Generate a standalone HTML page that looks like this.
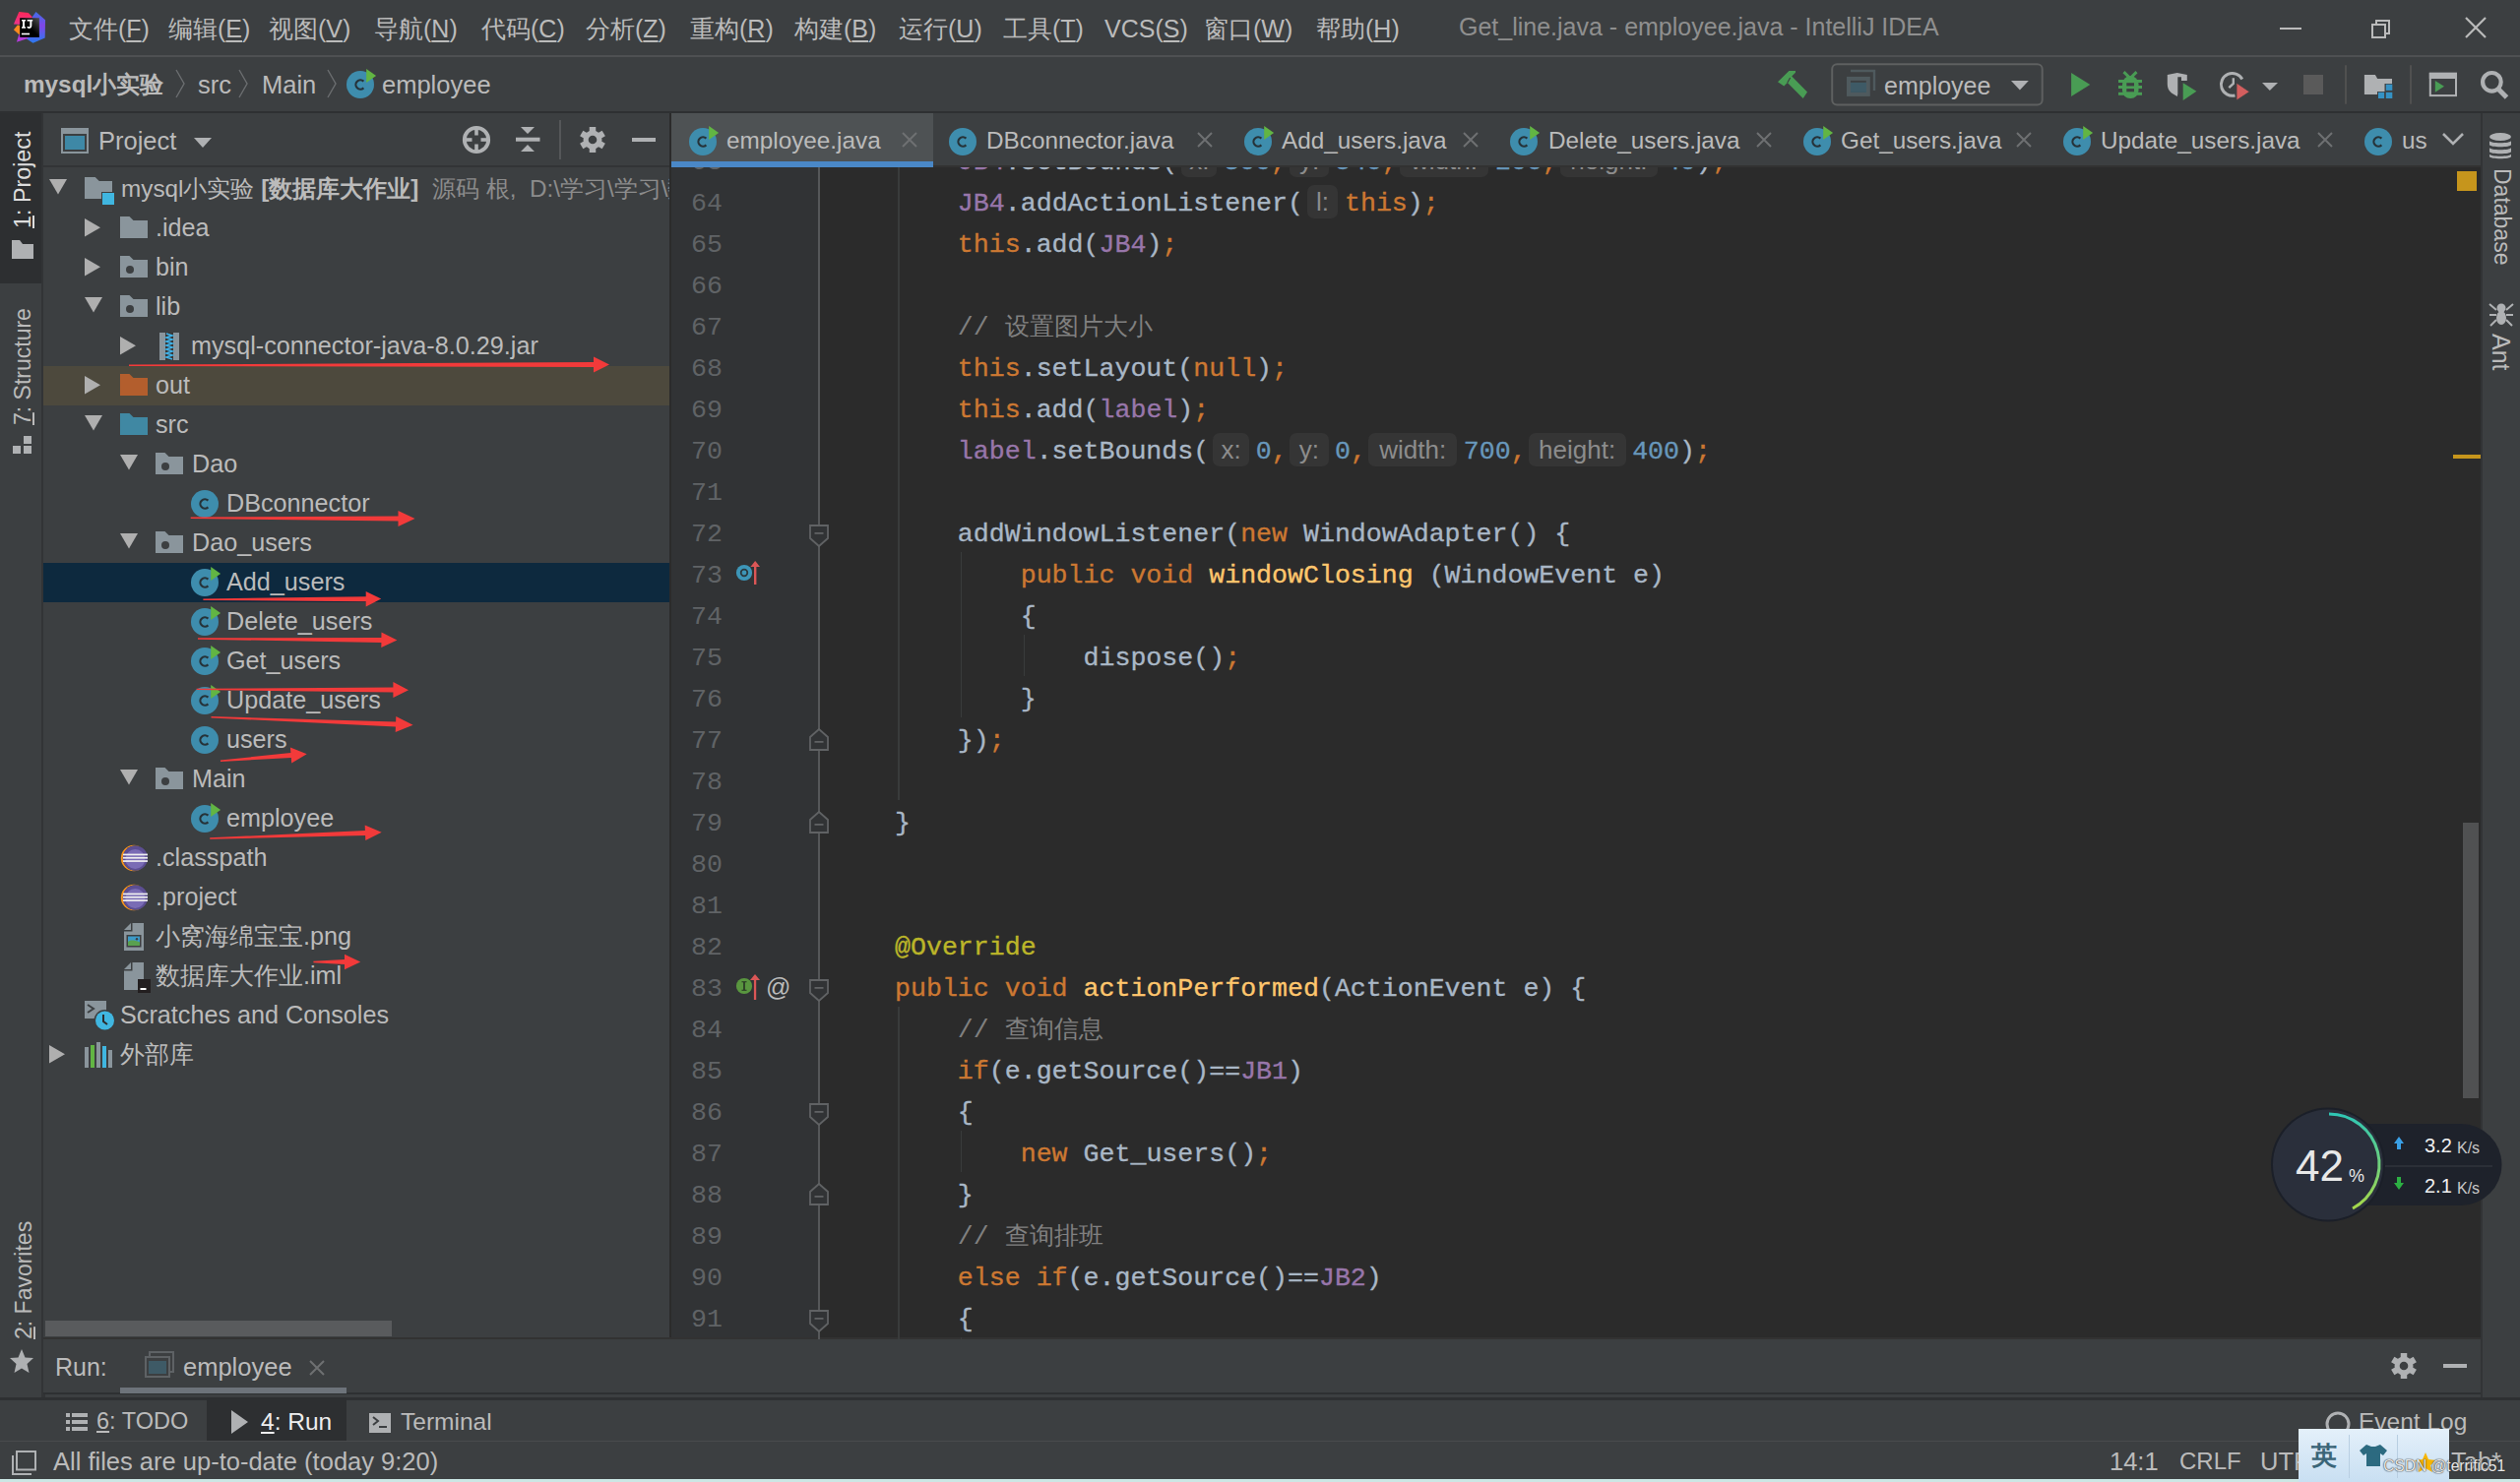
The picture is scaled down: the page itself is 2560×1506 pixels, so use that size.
<!DOCTYPE html><html><head><meta charset="utf-8"><style>
*{margin:0;padding:0;box-sizing:border-box}
html,body{width:2560px;height:1506px;overflow:hidden;background:#3C3F41;font-family:"Liberation Sans", sans-serif;color:#BBBBBB}
.a{position:absolute}
.t{position:absolute;white-space:pre;line-height:1}
.code{position:absolute;white-space:pre;font-family:"Liberation Mono", monospace;font-size:26.6px;line-height:42px;color:#A9B7C6;-webkit-text-stroke:0.35px currentColor}
.k{color:#CC7832} .f{color:#9876AA} .n{color:#6897BB} .c{color:#808080;font-weight:300;-webkit-text-stroke:0} .m{color:#FFC66D} .an{color:#BBB529}
.h{-webkit-text-stroke:0;display:inline-block;position:relative;height:34px;vertical-align:top;margin-top:2px;background:#353535;border-radius:7px;color:#8C8C8C;font-family:"Liberation Sans", sans-serif;font-size:26px;line-height:34px;text-align:center}
.ln{position:absolute;white-space:pre;font-family:"Liberation Mono", monospace;font-size:26.6px;line-height:42px;color:#606366;text-align:right;width:60px}
</style></head><body>
<div class="a" style="left:0;top:0;width:2560px;height:57px;background:#3C3F41"></div>
<div class="a" style="left:0;top:56px;width:2560px;height:2px;background:#4E5052"></div>
<div class="a" style="left:0;top:59px;width:2560px;height:55px;background:#3C3F41"></div>
<div class="a" style="left:0;top:113px;width:2560px;height:2px;background:#2E3032"></div>
<div class="a" style="left:0;top:115px;width:42px;height:1305px;background:#3C3F41"></div>
<div class="a" style="left:0;top:115px;width:42px;height:173px;background:#2D2F31"></div>
<div class="a" style="left:42px;top:115px;width:2px;height:1305px;background:#323436"></div>
<div class="a" style="left:2520px;top:115px;width:2px;height:1305px;background:#323436"></div>
<div class="a" style="left:2522px;top:115px;width:38px;height:1305px;background:#3C3F41"></div>
<div class="a" style="left:44px;top:115px;width:636px;height:1246px;background:#3C3F41"></div>
<div class="a" style="left:44px;top:168px;width:636px;height:2px;background:#323436"></div>
<div class="a" style="left:680px;top:115px;width:2px;height:1246px;background:#2B2B2B"></div>
<div class="a" style="left:682px;top:115px;width:1838px;height:55px;background:#3C3F41"></div>
<div class="a" style="left:682px;top:115px;width:266px;height:50px;background:#4E5254"></div>
<div class="a" style="left:682px;top:164px;width:266px;height:6px;background:#4A88C7"></div>
<div class="a" style="left:948px;top:168px;width:1572px;height:2px;background:#323232"></div>
<div class="a" style="left:682px;top:170px;width:150px;height:1191px;background:#313335"></div>
<div class="a" style="left:832px;top:170px;width:1688px;height:1191px;background:#2B2B2B"></div>
<div class="a" style="left:44px;top:1361px;width:2476px;height:55px;background:#3C3F41"></div>
<div class="a" style="left:44px;top:1359px;width:2476px;height:2px;background:#323232"></div>
<div class="a" style="left:44px;top:1414.5px;width:2476px;height:2px;background:#2E3032"></div>
<div class="a" style="left:0;top:1420px;width:2560px;height:2.5px;background:#2E3032"></div>
<div class="a" style="left:44px;top:1416.5px;width:2px;height:3.5px;background:#323436"></div>
<div class="a" style="left:0;top:1422.5px;width:2560px;height:41.5px;background:#3C3F41"></div>
<div class="a" style="left:210px;top:1420px;width:142px;height:44px;background:#2D2F31"></div>
<div class="a" style="left:0;top:1464px;width:2560px;height:2px;background:#494B4D"></div>
<div class="a" style="left:0;top:1465px;width:2560px;height:41px;background:#3C3F41"></div>
<div class="t" style="left:70px;top:17px;font-size:25px;color:#BBBBBB">文件(<u style="text-underline-offset:3px">F</u>)</div>
<div class="t" style="left:171px;top:17px;font-size:25px;color:#BBBBBB">编辑(<u style="text-underline-offset:3px">E</u>)</div>
<div class="t" style="left:273px;top:17px;font-size:25px;color:#BBBBBB">视图(<u style="text-underline-offset:3px">V</u>)</div>
<div class="t" style="left:380px;top:17px;font-size:25px;color:#BBBBBB">导航(<u style="text-underline-offset:3px">N</u>)</div>
<div class="t" style="left:489px;top:17px;font-size:25px;color:#BBBBBB">代码(<u style="text-underline-offset:3px">C</u>)</div>
<div class="t" style="left:595px;top:17px;font-size:25px;color:#BBBBBB">分析(<u style="text-underline-offset:3px">Z</u>)</div>
<div class="t" style="left:701px;top:17px;font-size:25px;color:#BBBBBB">重构(<u style="text-underline-offset:3px">R</u>)</div>
<div class="t" style="left:807px;top:17px;font-size:25px;color:#BBBBBB">构建(<u style="text-underline-offset:3px">B</u>)</div>
<div class="t" style="left:913px;top:17px;font-size:25px;color:#BBBBBB">运行(<u style="text-underline-offset:3px">U</u>)</div>
<div class="t" style="left:1019px;top:17px;font-size:25px;color:#BBBBBB">工具(<u style="text-underline-offset:3px">T</u>)</div>
<div class="t" style="left:1122px;top:17px;font-size:25px;color:#BBBBBB">VCS(<u style="text-underline-offset:3px">S</u>)</div>
<div class="t" style="left:1223px;top:17px;font-size:25px;color:#BBBBBB">窗口(<u style="text-underline-offset:3px">W</u>)</div>
<div class="t" style="left:1337px;top:17px;font-size:25px;color:#BBBBBB">帮助(<u style="text-underline-offset:3px">H</u>)</div>
<div class="t" style="left:1482px;top:15px;font-size:25px;color:#8F8F8F">Get_line.java - employee.java - IntelliJ IDEA</div>
<svg class="a" style="left:8px;top:6px" width="44" height="44" viewBox="0 0 44 44">
<defs><linearGradient id="lgb" x1="0" y1="0" x2="0" y2="1"><stop offset="0" stop-color="#3E6FE6"/><stop offset="0.45" stop-color="#8146E8"/><stop offset="1" stop-color="#2A7BEF"/></linearGradient>
<linearGradient id="lgp" x1="0" y1="0" x2="0" y2="1"><stop offset="0" stop-color="#FE2857"/><stop offset="1" stop-color="#E8358C"/></linearGradient>
<linearGradient id="lgk" x1="1" y1="0" x2="0" y2="1"><stop offset="0" stop-color="#505050"/><stop offset="0.5" stop-color="#000"/></linearGradient></defs>
<polygon points="28.5,5.9 38,14.2 37.7,32.6 25.5,37.7 19,33.5 24.9,11" fill="url(#lgb)"/>
<polygon points="11.3,5.9 20.8,7.1 25,11.5 14,19 5.9,18.4" fill="url(#lgp)"/>
<polygon points="5.9,24.3 9.8,19.6 12.5,20 12.5,29.5 11.3,29.1" fill="#FB8A1E"/>
<polygon points="8.9,36.8 11.3,29 21.4,32 19,33.5" fill="#B23CD8"/>
<rect x="12.2" y="12.2" width="19.7" height="19.7" fill="url(#lgk)"/>
<path d="M14 14H18V15.6H17V21.3H18V22.8H14V21.3H15V15.6H14Z" fill="#fff"/>
<path d="M19.6 14H25.2V15.6H24.3V20C24.3 22 23.2 22.9 21.5 22.9C20.3 22.9 19.5 22.4 19.2 21.5L20.6 20.8C20.8 21.2 21.1 21.3 21.5 21.3C22.1 21.3 22.4 21 22.4 20.2V15.6H19.6Z" fill="#fff"/>
<rect x="13.9" y="27.7" width="8.2" height="1.6" fill="#fff"/>
</svg>
<div class="a" style="left:2316px;top:28px;width:22px;height:2px;background:#BBBBBB"></div>
<div class="a" style="left:2413px;top:20px;width:15px;height:15px;border:2px solid #BBBBBB"></div>
<div class="a" style="left:2409px;top:24px;width:15px;height:15px;border:2px solid #BBBBBB;background:#3C3F41"></div>
<svg class="a" style="left:2503px;top:16px" width="24" height="24" viewBox="0 0 24 24"><path d="M2 2L22 22M22 2L2 22" stroke="#BBBBBB" stroke-width="2.2"/></svg>
<div class="t" style="left:24px;top:74px;font-size:24.3px;font-weight:bold;color:#BBBBBB">mysql小实验</div>
<svg class="a" style="left:178px;top:70px" width="10" height="30" viewBox="0 0 10 30"><path d="M1 1L9 15L1 29" stroke="#6B6E70" stroke-width="1.4" fill="none"/></svg>
<svg class="a" style="left:242px;top:70px" width="10" height="30" viewBox="0 0 10 30"><path d="M1 1L9 15L1 29" stroke="#6B6E70" stroke-width="1.4" fill="none"/></svg>
<svg class="a" style="left:332px;top:70px" width="10" height="30" viewBox="0 0 10 30"><path d="M1 1L9 15L1 29" stroke="#6B6E70" stroke-width="1.4" fill="none"/></svg>
<div class="t" style="left:201px;top:74px;font-size:25.5px;color:#BBBBBB">src</div>
<div class="t" style="left:266px;top:74px;font-size:25.5px;color:#BBBBBB">Main</div>
<div class="t" style="left:388px;top:74px;font-size:25.5px;color:#BBBBBB">employee</div>
<div class="a" style="left:62px;top:130px;width:28px;height:26px;background:#8A959C"></div>
<div class="a" style="left:64px;top:136px;width:24px;height:18px;background:#3C3F41"></div>
<div class="a" style="left:66px;top:138px;width:20px;height:14px;background:#3E88A6"></div>
<div class="t" style="left:100px;top:131px;font-size:25.5px;color:#BBBBBB">Project</div>
<svg class="a" style="left:197px;top:140px" width="18" height="11" viewBox="0 0 18 11"><path d="M0 0H18L9 10Z" fill="#AFB1B3"/></svg>
<svg class="a" style="left:468px;top:126px" width="32" height="32" viewBox="0 0 32 32"><circle cx="16" cy="16" r="12.2" stroke="#AFB1B3" stroke-width="3.8" fill="none"/><rect x="14.2" y="3" width="3.6" height="8.5" fill="#AFB1B3"/><rect x="14.2" y="20.5" width="3.6" height="8.5" fill="#AFB1B3"/><rect x="3" y="14.2" width="8.5" height="3.6" fill="#AFB1B3"/><rect x="20.5" y="14.2" width="8.5" height="3.6" fill="#AFB1B3"/></svg>
<svg class="a" style="left:524px;top:129px" width="26" height="26" viewBox="0 0 26 26"><path d="M5 0H19L12 7Z M5 25H19L12 18Z" fill="#AFB1B3"/><rect x="0" y="10.7" width="24.5" height="4" fill="#AFB1B3"/></svg>
<div class="a" style="left:568px;top:122px;width:2px;height:40px;background:#555759"></div>
<svg class="a" style="left:588px;top:128px" width="28" height="28" viewBox="0 0 28 28"><g fill="#AFB1B3"><circle cx="14" cy="14" r="9.5"/><rect x="-3.25" y="-13" width="6.5" height="26" transform="translate(14 14) rotate(0)"/><rect x="-3.25" y="-13" width="6.5" height="26" transform="translate(14 14) rotate(60)"/><rect x="-3.25" y="-13" width="6.5" height="26" transform="translate(14 14) rotate(120)"/></g><circle cx="14" cy="14" r="4.3" fill="#3C3F41"/></svg>
<div class="a" style="left:642px;top:140px;width:24px;height:4px;background:#AFB1B3"></div>
<div class="a" style="left:0;top:170px;width:680px;height:1191px;overflow:hidden"><div class="a" style="left:0;top:-170px;width:680px;height:1506px">
<div class="a" style="left:44px;top:372px;width:636px;height:40px;background:#4D493D"></div>
<div class="a" style="left:44px;top:572px;width:636px;height:40px;background:#0D293E"></div>
<svg class="a" style="left:50px;top:182px" width="18" height="16" viewBox="0 0 18 16"><path d="M0 0H18L9 15.5Z" fill="#AFAFAF"/></svg>
<svg class="a" style="left:86px;top:180px" width="31" height="37" viewBox="0 0 31 37"><path d="M0 0H10.7L14.8 4H28V22H0Z" fill="#8A959C"/><rect x="17" y="15" width="14" height="14" fill="#3C3F41"/><rect x="18" y="16" width="12" height="12" fill="#40B6E0"/></svg>
<div class="t" style="left:123px;top:179px;font-size:25.2px;color:#BBBBBB"><span style="font-size:24.3px">mysql小实验 <b>[数据库大作业]</b>  <span style="color:#8C8C8C">源码 根,  D:\学习\学习\数据库</span></span></div>
<svg class="a" style="left:86px;top:222px" width="17" height="19" viewBox="0 0 17 19"><path d="M0 0L16 9.2L0 18.4Z" fill="#AFAFAF"/></svg>
<svg class="a" style="left:122px;top:220px" width="28" height="22" viewBox="0 0 28 22"><path d="M0 0H9.5L13.5 4H28V22H0Z" fill="#8A959C"/></svg>
<div class="t" style="left:158px;top:219px;font-size:25.2px;color:#BBBBBB">.idea</div>
<svg class="a" style="left:86px;top:262px" width="17" height="19" viewBox="0 0 17 19"><path d="M0 0L16 9.2L0 18.4Z" fill="#AFAFAF"/></svg>
<svg class="a" style="left:122px;top:260px" width="28" height="22" viewBox="0 0 28 22"><path d="M0 0H9.5L13.5 4H28V22H0Z" fill="#8A959C"/><circle cx="10" cy="14" r="4" fill="#3C3F41"/></svg>
<div class="t" style="left:158px;top:259px;font-size:25.2px;color:#BBBBBB">bin</div>
<svg class="a" style="left:86px;top:302px" width="18" height="16" viewBox="0 0 18 16"><path d="M0 0H18L9 15.5Z" fill="#AFAFAF"/></svg>
<svg class="a" style="left:122px;top:300px" width="28" height="22" viewBox="0 0 28 22"><path d="M0 0H9.5L13.5 4H28V22H0Z" fill="#8A959C"/><circle cx="10" cy="14" r="4" fill="#3C3F41"/></svg>
<div class="t" style="left:158px;top:299px;font-size:25.2px;color:#BBBBBB">lib</div>
<svg class="a" style="left:86px;top:382px" width="17" height="19" viewBox="0 0 17 19"><path d="M0 0L16 9.2L0 18.4Z" fill="#AFAFAF"/></svg>
<svg class="a" style="left:122px;top:380px" width="28" height="22" viewBox="0 0 28 22"><path d="M0 0H9.5L13.5 4H28V22H0Z" fill="#B35E2D"/></svg>
<div class="t" style="left:158px;top:379px;font-size:25.2px;color:#BBBBBB">out</div>
<svg class="a" style="left:86px;top:422px" width="18" height="16" viewBox="0 0 18 16"><path d="M0 0H18L9 15.5Z" fill="#AFAFAF"/></svg>
<svg class="a" style="left:122px;top:420px" width="28" height="22" viewBox="0 0 28 22"><path d="M0 0H9.5L13.5 4H28V22H0Z" fill="#4088A3"/></svg>
<div class="t" style="left:158px;top:419px;font-size:25.2px;color:#BBBBBB">src</div>
<svg class="a" style="left:122px;top:342px" width="17" height="19" viewBox="0 0 17 19"><path d="M0 0L16 9.2L0 18.4Z" fill="#AFAFAF"/></svg>
<svg class="a" style="left:162px;top:338px" width="20" height="28" viewBox="0 0 20 28"><rect x="0" y="0" width="6" height="28" fill="#8A959C"/><rect x="14" y="0" width="6" height="28" fill="#8A959C"/><rect x="6" y="0" width="8" height="28" fill="#3A3634"/><path d="M7 1L13 3L7 5L13 7L7 9L13 11L7 13L13 15L7 17L13 19L7 21L13 23L7 25L13 27" stroke="#3FB3EA" stroke-width="1.6" fill="none"/></svg>
<div class="t" style="left:194px;top:339px;font-size:25.2px;color:#BBBBBB">mysql-connector-java-8.0.29.jar</div>
<svg class="a" style="left:122px;top:462px" width="18" height="16" viewBox="0 0 18 16"><path d="M0 0H18L9 15.5Z" fill="#AFAFAF"/></svg>
<svg class="a" style="left:158px;top:460px" width="28" height="22" viewBox="0 0 28 22"><path d="M0 0H9.5L13.5 4H28V22H0Z" fill="#8A959C"/><circle cx="10" cy="14" r="4" fill="#3C3F41"/></svg>
<div class="t" style="left:195px;top:459px;font-size:25.2px;color:#BBBBBB">Dao</div>
<svg class="a" style="left:122px;top:542px" width="18" height="16" viewBox="0 0 18 16"><path d="M0 0H18L9 15.5Z" fill="#AFAFAF"/></svg>
<svg class="a" style="left:158px;top:540px" width="28" height="22" viewBox="0 0 28 22"><path d="M0 0H9.5L13.5 4H28V22H0Z" fill="#8A959C"/><circle cx="10" cy="14" r="4" fill="#3C3F41"/></svg>
<div class="t" style="left:195px;top:539px;font-size:25.2px;color:#BBBBBB">Dao_users</div>
<svg class="a" style="left:122px;top:782px" width="18" height="16" viewBox="0 0 18 16"><path d="M0 0H18L9 15.5Z" fill="#AFAFAF"/></svg>
<svg class="a" style="left:158px;top:780px" width="28" height="22" viewBox="0 0 28 22"><path d="M0 0H9.5L13.5 4H28V22H0Z" fill="#8A959C"/><circle cx="10" cy="14" r="4" fill="#3C3F41"/></svg>
<div class="t" style="left:195px;top:779px;font-size:25.2px;color:#BBBBBB">Main</div>
<svg class="a" style="left:194px;top:494px" width="32" height="34" viewBox="0 0 32 34"><circle cx="14" cy="18" r="14" fill="#3E8DAD"/><path d="M17.4 14.6A4.7 4.7 0 1 0 17.4 21.4" stroke="#263238" stroke-width="2.2" fill="none"/></svg>
<div class="t" style="left:230px;top:499px;font-size:25.2px;color:#BBBBBB">DBconnector</div>
<svg class="a" style="left:194px;top:574px" width="32" height="34" viewBox="0 0 32 34"><circle cx="14" cy="18" r="14" fill="#3E8DAD"/><path d="M17.4 14.6A4.7 4.7 0 1 0 17.4 21.4" stroke="#263238" stroke-width="2.2" fill="none"/><path d="M20.2 2L20.2 15.9L30.1 9.1Z" fill="#62B543"/></svg>
<div class="t" style="left:230px;top:579px;font-size:25.2px;color:#BBBBBB">Add_users</div>
<svg class="a" style="left:194px;top:614px" width="32" height="34" viewBox="0 0 32 34"><circle cx="14" cy="18" r="14" fill="#3E8DAD"/><path d="M17.4 14.6A4.7 4.7 0 1 0 17.4 21.4" stroke="#263238" stroke-width="2.2" fill="none"/><path d="M20.2 2L20.2 15.9L30.1 9.1Z" fill="#62B543"/></svg>
<div class="t" style="left:230px;top:619px;font-size:25.2px;color:#BBBBBB">Delete_users</div>
<svg class="a" style="left:194px;top:654px" width="32" height="34" viewBox="0 0 32 34"><circle cx="14" cy="18" r="14" fill="#3E8DAD"/><path d="M17.4 14.6A4.7 4.7 0 1 0 17.4 21.4" stroke="#263238" stroke-width="2.2" fill="none"/><path d="M20.2 2L20.2 15.9L30.1 9.1Z" fill="#62B543"/></svg>
<div class="t" style="left:230px;top:659px;font-size:25.2px;color:#BBBBBB">Get_users</div>
<svg class="a" style="left:194px;top:694px" width="32" height="34" viewBox="0 0 32 34"><circle cx="14" cy="18" r="14" fill="#3E8DAD"/><path d="M17.4 14.6A4.7 4.7 0 1 0 17.4 21.4" stroke="#263238" stroke-width="2.2" fill="none"/><path d="M20.2 2L20.2 15.9L30.1 9.1Z" fill="#62B543"/></svg>
<div class="t" style="left:230px;top:699px;font-size:25.2px;color:#BBBBBB">Update_users</div>
<svg class="a" style="left:194px;top:734px" width="32" height="34" viewBox="0 0 32 34"><circle cx="14" cy="18" r="14" fill="#3E8DAD"/><path d="M17.4 14.6A4.7 4.7 0 1 0 17.4 21.4" stroke="#263238" stroke-width="2.2" fill="none"/></svg>
<div class="t" style="left:230px;top:739px;font-size:25.2px;color:#BBBBBB">users</div>
<svg class="a" style="left:194px;top:814px" width="32" height="34" viewBox="0 0 32 34"><circle cx="14" cy="18" r="14" fill="#3E8DAD"/><path d="M17.4 14.6A4.7 4.7 0 1 0 17.4 21.4" stroke="#263238" stroke-width="2.2" fill="none"/><path d="M20.2 2L20.2 15.9L30.1 9.1Z" fill="#62B543"/></svg>
<div class="t" style="left:230px;top:819px;font-size:25.2px;color:#BBBBBB">employee</div>
<svg class="a" style="left:121px;top:857px" width="30" height="30" viewBox="0 0 30 30"><circle cx="15" cy="15" r="13.2" fill="#F7941E"/><circle cx="16.6" cy="15" r="12.8" fill="#3C3F41"/><circle cx="16.4" cy="15" r="12.6" fill="#5C4E93"/><circle cx="16.4" cy="16" r="10" fill="#7A6CB5"/><rect x="4" y="10.6" width="25" height="1.7" fill="#F0F0F0"/><rect x="4" y="13.9" width="25" height="1.7" fill="#F0F0F0"/><rect x="4" y="17.2" width="25" height="1.7" fill="#F0F0F0"/></svg>
<div class="t" style="left:158px;top:859px;font-size:25.2px;color:#BBBBBB">.classpath</div>
<svg class="a" style="left:121px;top:897px" width="30" height="30" viewBox="0 0 30 30"><circle cx="15" cy="15" r="13.2" fill="#F7941E"/><circle cx="16.6" cy="15" r="12.8" fill="#3C3F41"/><circle cx="16.4" cy="15" r="12.6" fill="#5C4E93"/><circle cx="16.4" cy="16" r="10" fill="#7A6CB5"/><rect x="4" y="10.6" width="25" height="1.7" fill="#F0F0F0"/><rect x="4" y="13.9" width="25" height="1.7" fill="#F0F0F0"/><rect x="4" y="17.2" width="25" height="1.7" fill="#F0F0F0"/></svg>
<div class="t" style="left:158px;top:899px;font-size:25.2px;color:#BBBBBB">.project</div>
<svg class="a" style="left:126px;top:938px" width="22" height="28" viewBox="0 0 22 28"><path d="M8.5 0H20V28H0V8.5H8.5Z" fill="#8A959C"/><path d="M0 7L7 0V7Z" fill="#8A959C"/><rect x="2.5" y="12" width="15" height="12.5" fill="#3C3F41"/><rect x="4" y="13.5" width="12" height="9.5" fill="#3D9AC8"/><path d="M4 23V19C7 17 10 17 16 19.5V23Z" fill="#59A14F"/><circle cx="13" cy="16.2" r="1.2" fill="#3C3F41"/></svg>
<div class="t" style="left:158px;top:939px;font-size:25.2px;color:#BBBBBB">小窝海绵宝宝.png</div>
<svg class="a" style="left:126px;top:978px" width="28" height="32" viewBox="0 0 28 32"><path d="M8.5 0H20V28H0V8.5H8.5Z" fill="#8A959C"/><path d="M0 7L7 0V7Z" fill="#8A959C"/><rect x="14" y="17" width="13" height="14" fill="#231F20"/><rect x="16.5" y="26" width="6" height="2" fill="#fff"/></svg>
<div class="t" style="left:158px;top:979px;font-size:25.2px;color:#BBBBBB">数据库大作业.iml</div>
<svg class="a" style="left:86px;top:1017px" width="32" height="32" viewBox="0 0 32 32"><rect x="0" y="0" width="22" height="18" fill="#8A959C"/><path d="M3 4L9 8L3 12" stroke="#3C3F41" stroke-width="2" fill="none"/><circle cx="20.5" cy="20" r="11" fill="#3C3F41"/><circle cx="20.5" cy="20" r="9.5" fill="#40B6E0"/><path d="M19 14V21L23 24" stroke="#2B2B2B" stroke-width="2" fill="none"/></svg>
<div class="t" style="left:122px;top:1019px;font-size:25.2px;color:#BBBBBB">Scratches and Consoles</div>
<svg class="a" style="left:50px;top:1062px" width="17" height="19" viewBox="0 0 17 19"><path d="M0 0L16 9.2L0 18.4Z" fill="#AFAFAF"/></svg>
<svg class="a" style="left:86px;top:1059px" width="30" height="26" viewBox="0 0 30 26"><rect x="0" y="5" width="4" height="21" fill="#8A959C"/><rect x="6" y="3" width="4" height="23" fill="#62B543"/><rect x="12" y="0" width="4" height="26" fill="#8A959C"/><rect x="18" y="4" width="4" height="22" fill="#40B6E0"/><rect x="24" y="8" width="4" height="18" fill="#8A959C"/></svg>
<div class="t" style="left:122px;top:1059px;font-size:25.2px;color:#BBBBBB">外部库</div>
</div></div>
<div class="a" style="left:46px;top:1342px;width:352px;height:16px;background:#595B5D"></div>
<div class="a" style="left:832px;top:170px;width:1688px;height:1191px;overflow:hidden">
<div class="code" style="left:13.200000000000045px;top:-26px">        <span class="f">JB4</span>.setBounds(<span class="h" style="width:36px;margin-left:4px;margin-right:7px">x:</span><span class="n">300</span><span class="k">,</span><span class="h" style="width:40px;margin-left:3px;margin-right:6px">y:</span><span class="n">540</span><span class="k">,</span><span class="h" style="width:90px;margin-left:2px;margin-right:7px">width:</span><span class="n">200</span><span class="k">,</span><span class="h" style="width:99px;margin-left:2px;margin-right:7px">height:</span><span class="n">40</span>)<span class="k">;</span></div>
<div class="code" style="left:13.200000000000045px;top:16px">        <span class="f">JB4</span>.addActionListener(<span class="h" style="width:31px;margin-left:4px;margin-right:7px">l:</span><span class="k">this</span>)<span class="k">;</span></div>
<div class="code" style="left:13.200000000000045px;top:58px">        <span class="k">this</span>.add(<span class="f">JB4</span>)<span class="k">;</span></div>
<div class="code" style="left:13.200000000000045px;top:100px"></div>
<div class="code" style="left:13.200000000000045px;top:142px">        <span class="c">// <span style="font-size:25px">设置图片大小</span></span></div>
<div class="code" style="left:13.200000000000045px;top:184px">        <span class="k">this</span>.setLayout(<span class="k">null</span>)<span class="k">;</span></div>
<div class="code" style="left:13.200000000000045px;top:226px">        <span class="k">this</span>.add(<span class="f">label</span>)<span class="k">;</span></div>
<div class="code" style="left:13.200000000000045px;top:268px">        <span class="f">label</span>.setBounds(<span class="h" style="width:37px;margin-left:4px;margin-right:6.5px">x:</span><span class="n">0</span><span class="k">,</span><span class="h" style="width:40px;margin-left:2.3px;margin-right:6px">y:</span><span class="n">0</span><span class="k">,</span><span class="h" style="width:90px;margin-left:2.4px;margin-right:6.5px">width:</span><span class="n">700</span><span class="k">,</span><span class="h" style="width:99px;margin-left:2px;margin-right:6.5px">height:</span><span class="n">400</span>)<span class="k">;</span></div>
<div class="code" style="left:13.200000000000045px;top:310px"></div>
<div class="code" style="left:13.200000000000045px;top:352px">        addWindowListener(<span class="k">new</span> WindowAdapter() {</div>
<div class="code" style="left:13.200000000000045px;top:394px">            <span class="k">public void </span><span class="m">windowClosing</span> (WindowEvent e)</div>
<div class="code" style="left:13.200000000000045px;top:436px">            {</div>
<div class="code" style="left:13.200000000000045px;top:478px">                dispose()<span class="k">;</span></div>
<div class="code" style="left:13.200000000000045px;top:520px">            }</div>
<div class="code" style="left:13.200000000000045px;top:562px">        })<span class="k">;</span></div>
<div class="code" style="left:13.200000000000045px;top:604px"></div>
<div class="code" style="left:13.200000000000045px;top:646px">    }</div>
<div class="code" style="left:13.200000000000045px;top:688px"></div>
<div class="code" style="left:13.200000000000045px;top:730px"></div>
<div class="code" style="left:13.200000000000045px;top:772px">    <span class="an">@Override</span></div>
<div class="code" style="left:13.200000000000045px;top:814px">    <span class="k">public void </span><span class="m">actionPerformed</span>(ActionEvent e) {</div>
<div class="code" style="left:13.200000000000045px;top:856px">        <span class="c">// <span style="font-size:25px">查询信息</span></span></div>
<div class="code" style="left:13.200000000000045px;top:898px">        <span class="k">if</span>(e.getSource()==<span class="f">JB1</span>)</div>
<div class="code" style="left:13.200000000000045px;top:940px">        {</div>
<div class="code" style="left:13.200000000000045px;top:982px">            <span class="k">new</span> Get_users()<span class="k">;</span></div>
<div class="code" style="left:13.200000000000045px;top:1024px">        }</div>
<div class="code" style="left:13.200000000000045px;top:1066px">        <span class="c">// <span style="font-size:25px">查询排班</span></span></div>
<div class="code" style="left:13.200000000000045px;top:1108px">        <span class="k">else if</span>(e.getSource()==<span class="f">JB2</span>)</div>
<div class="code" style="left:13.200000000000045px;top:1150px">        {</div>
</div>
<div class="a" style="left:682px;top:170px;width:150px;height:1191px;overflow:hidden">
<div class="ln" style="left:-8px;top:-26px">63</div>
<div class="ln" style="left:-8px;top:16px">64</div>
<div class="ln" style="left:-8px;top:58px">65</div>
<div class="ln" style="left:-8px;top:100px">66</div>
<div class="ln" style="left:-8px;top:142px">67</div>
<div class="ln" style="left:-8px;top:184px">68</div>
<div class="ln" style="left:-8px;top:226px">69</div>
<div class="ln" style="left:-8px;top:268px">70</div>
<div class="ln" style="left:-8px;top:310px">71</div>
<div class="ln" style="left:-8px;top:352px">72</div>
<div class="ln" style="left:-8px;top:394px">73</div>
<div class="ln" style="left:-8px;top:436px">74</div>
<div class="ln" style="left:-8px;top:478px">75</div>
<div class="ln" style="left:-8px;top:520px">76</div>
<div class="ln" style="left:-8px;top:562px">77</div>
<div class="ln" style="left:-8px;top:604px">78</div>
<div class="ln" style="left:-8px;top:646px">79</div>
<div class="ln" style="left:-8px;top:688px">80</div>
<div class="ln" style="left:-8px;top:730px">81</div>
<div class="ln" style="left:-8px;top:772px">82</div>
<div class="ln" style="left:-8px;top:814px">83</div>
<div class="ln" style="left:-8px;top:856px">84</div>
<div class="ln" style="left:-8px;top:898px">85</div>
<div class="ln" style="left:-8px;top:940px">86</div>
<div class="ln" style="left:-8px;top:982px">87</div>
<div class="ln" style="left:-8px;top:1024px">88</div>
<div class="ln" style="left:-8px;top:1066px">89</div>
<div class="ln" style="left:-8px;top:1108px">90</div>
<div class="ln" style="left:-8px;top:1150px">91</div>
</div>
<div class="a" style="left:831px;top:170px;width:2px;height:1191px;background:#555759"></div>
<svg class="a" style="left:821px;top:532px" width="22" height="26" viewBox="0 0 22 26"><path d="M2 2H20V15L11 23L2 15Z" fill="#313335" stroke="#606264" stroke-width="1.8"/><rect x="6.5" y="9" width="9" height="1.8" fill="#606264"/></svg>
<svg class="a" style="left:821px;top:994px" width="22" height="26" viewBox="0 0 22 26"><path d="M2 2H20V15L11 23L2 15Z" fill="#313335" stroke="#606264" stroke-width="1.8"/><rect x="6.5" y="9" width="9" height="1.8" fill="#606264"/></svg>
<svg class="a" style="left:821px;top:1120px" width="22" height="26" viewBox="0 0 22 26"><path d="M2 2H20V15L11 23L2 15Z" fill="#313335" stroke="#606264" stroke-width="1.8"/><rect x="6.5" y="9" width="9" height="1.8" fill="#606264"/></svg>
<svg class="a" style="left:821px;top:1330px" width="22" height="26" viewBox="0 0 22 26"><path d="M2 2H20V15L11 23L2 15Z" fill="#313335" stroke="#606264" stroke-width="1.8"/><rect x="6.5" y="9" width="9" height="1.8" fill="#606264"/></svg>
<svg class="a" style="left:821px;top:738px" width="22" height="26" viewBox="0 0 22 26"><path d="M2 24H20V11L11 3L2 11Z" fill="#313335" stroke="#606264" stroke-width="1.8"/><rect x="6.5" y="15" width="9" height="1.8" fill="#606264"/></svg>
<svg class="a" style="left:821px;top:822px" width="22" height="26" viewBox="0 0 22 26"><path d="M2 24H20V11L11 3L2 11Z" fill="#313335" stroke="#606264" stroke-width="1.8"/><rect x="6.5" y="15" width="9" height="1.8" fill="#606264"/></svg>
<svg class="a" style="left:821px;top:1200px" width="22" height="26" viewBox="0 0 22 26"><path d="M2 24H20V11L11 3L2 11Z" fill="#313335" stroke="#606264" stroke-width="1.8"/><rect x="6.5" y="15" width="9" height="1.8" fill="#606264"/></svg>
<div class="a" style="left:912.0px;top:170px;width:1.5px;height:643px;background:#393B3B"></div>
<div class="a" style="left:975.9px;top:561px;width:1.5px;height:168px;background:#393B3B"></div>
<div class="a" style="left:1039.7px;top:645px;width:1.5px;height:42px;background:#393B3B"></div>
<div class="a" style="left:912.0px;top:1023px;width:1.5px;height:338px;background:#393B3B"></div>
<div class="a" style="left:975.9px;top:1149px;width:1.5px;height:42px;background:#393B3B"></div>
<div class="a" style="left:975.9px;top:1359px;width:1.5px;height:2px;background:#393B3B"></div>
<svg class="a" style="left:746px;top:570px" width="30" height="26" viewBox="0 0 30 26"><circle cx="10" cy="12" r="8.1" fill="#3D96B8"/><circle cx="10" cy="12" r="3.3" fill="none" stroke="#2A3A40" stroke-width="1.8"/><circle cx="10" cy="12" r="1.5" fill="#3D96B8"/><path d="M16.4 6H26L21.2 0Z" fill="#DB5656"/><rect x="20" y="6" width="2.4" height="18" fill="#DB5656"/></svg>
<svg class="a" style="left:746px;top:990px" width="30" height="26" viewBox="0 0 30 26"><circle cx="10" cy="12" r="8.1" fill="#59963F"/><path d="M7.5 7.2H12.5V8.2H10.8V15.8H12.5V16.8H7.5V15.8H9.2V8.2H7.5Z" fill="#263323"/><path d="M16 6H26L21 0Z" fill="#DB5656"/><rect x="19.9" y="6" width="2.3" height="20" fill="#DB5656"/></svg>
<div class="t" style="left:778px;top:991px;font-size:25px;color:#BBBBBB">@</div>
<div class="a" style="left:2496px;top:174px;width:20px;height:20px;background:#C6951C"></div>
<div class="a" style="left:2492px;top:462px;width:28px;height:4px;background:#C6951C"></div>
<div class="a" style="left:2502px;top:836px;width:16px;height:280px;background:#505152"></div>
<svg class="a" style="left:700px;top:126px" width="32" height="34" viewBox="0 0 32 34"><circle cx="14" cy="18" r="14" fill="#3E8DAD"/><path d="M17.4 14.6A4.7 4.7 0 1 0 17.4 21.4" stroke="#263238" stroke-width="2.2" fill="none"/><path d="M20.2 2L20.2 15.9L30.1 9.1Z" fill="#62B543"/></svg>
<div class="t" style="left:738px;top:131px;font-size:24.3px;color:#BBBBBB">employee.java</div>
<svg class="a" style="left:915px;top:133px" width="18" height="18" viewBox="0 0 18 18"><path d="M2 2L16 16M16 2L2 16" stroke="#6E7072" stroke-width="2"/></svg>
<svg class="a" style="left:964px;top:126px" width="32" height="34" viewBox="0 0 32 34"><circle cx="14" cy="18" r="14" fill="#3E8DAD"/><path d="M17.4 14.6A4.7 4.7 0 1 0 17.4 21.4" stroke="#263238" stroke-width="2.2" fill="none"/></svg>
<div class="t" style="left:1002px;top:131px;font-size:24.3px;color:#BBBBBB">DBconnector.java</div>
<svg class="a" style="left:1215px;top:133px" width="18" height="18" viewBox="0 0 18 18"><path d="M2 2L16 16M16 2L2 16" stroke="#6E7072" stroke-width="2"/></svg>
<svg class="a" style="left:1264px;top:126px" width="32" height="34" viewBox="0 0 32 34"><circle cx="14" cy="18" r="14" fill="#3E8DAD"/><path d="M17.4 14.6A4.7 4.7 0 1 0 17.4 21.4" stroke="#263238" stroke-width="2.2" fill="none"/><path d="M20.2 2L20.2 15.9L30.1 9.1Z" fill="#62B543"/></svg>
<div class="t" style="left:1302px;top:131px;font-size:24.3px;color:#BBBBBB">Add_users.java</div>
<svg class="a" style="left:1485px;top:133px" width="18" height="18" viewBox="0 0 18 18"><path d="M2 2L16 16M16 2L2 16" stroke="#6E7072" stroke-width="2"/></svg>
<svg class="a" style="left:1534px;top:126px" width="32" height="34" viewBox="0 0 32 34"><circle cx="14" cy="18" r="14" fill="#3E8DAD"/><path d="M17.4 14.6A4.7 4.7 0 1 0 17.4 21.4" stroke="#263238" stroke-width="2.2" fill="none"/><path d="M20.2 2L20.2 15.9L30.1 9.1Z" fill="#62B543"/></svg>
<div class="t" style="left:1573px;top:131px;font-size:24.3px;color:#BBBBBB">Delete_users.java</div>
<svg class="a" style="left:1783px;top:133px" width="18" height="18" viewBox="0 0 18 18"><path d="M2 2L16 16M16 2L2 16" stroke="#6E7072" stroke-width="2"/></svg>
<svg class="a" style="left:1832px;top:126px" width="32" height="34" viewBox="0 0 32 34"><circle cx="14" cy="18" r="14" fill="#3E8DAD"/><path d="M17.4 14.6A4.7 4.7 0 1 0 17.4 21.4" stroke="#263238" stroke-width="2.2" fill="none"/><path d="M20.2 2L20.2 15.9L30.1 9.1Z" fill="#62B543"/></svg>
<div class="t" style="left:1870px;top:131px;font-size:24.3px;color:#BBBBBB">Get_users.java</div>
<svg class="a" style="left:2047px;top:133px" width="18" height="18" viewBox="0 0 18 18"><path d="M2 2L16 16M16 2L2 16" stroke="#6E7072" stroke-width="2"/></svg>
<svg class="a" style="left:2096px;top:126px" width="32" height="34" viewBox="0 0 32 34"><circle cx="14" cy="18" r="14" fill="#3E8DAD"/><path d="M17.4 14.6A4.7 4.7 0 1 0 17.4 21.4" stroke="#263238" stroke-width="2.2" fill="none"/><path d="M20.2 2L20.2 15.9L30.1 9.1Z" fill="#62B543"/></svg>
<div class="t" style="left:2134px;top:131px;font-size:24.3px;color:#BBBBBB">Update_users.java</div>
<svg class="a" style="left:2353px;top:133px" width="18" height="18" viewBox="0 0 18 18"><path d="M2 2L16 16M16 2L2 16" stroke="#6E7072" stroke-width="2"/></svg>
<svg class="a" style="left:2402px;top:126px" width="32" height="34" viewBox="0 0 32 34"><circle cx="14" cy="18" r="14" fill="#3E8DAD"/><path d="M17.4 14.6A4.7 4.7 0 1 0 17.4 21.4" stroke="#263238" stroke-width="2.2" fill="none"/></svg>
<div class="t" style="left:2440px;top:131px;font-size:24.3px;color:#BBBBBB">us</div>
<svg class="a" style="left:2480px;top:133px" width="24" height="16" viewBox="0 0 24 16"><path d="M2 3L12 13L22 3" stroke="#AFB1B3" stroke-width="2.6" fill="none"/></svg>
<svg class="a" style="left:0;top:0" width="2560" height="114" viewBox="0 0 2560 114">
<path d="M1806 83.2L1817.4 71.9H1824V73.7L1820.2 77.5L1836 93.5L1831.7 99.9L1815.8 84L1812.3 87.4Z" fill="#499C54"/>
<path d="M1815.8 84L1818.6 79" stroke="#3C3F41" stroke-width="1.2"/>
<rect x="1861.2" y="65.2" width="213.5" height="41.4" rx="5" fill="none" stroke="#5E6060" stroke-width="2"/>
<path d="M1880 72H1904V92" fill="none" stroke="#4F5A5E" stroke-width="2.4"/>
<rect x="1878" y="79.9" width="19.8" height="16" fill="#3C3F41" stroke="#4F5A5E" stroke-width="4"/>
<rect x="1880" y="83.8" width="16" height="10.1" fill="#3E5A66"/>
<path d="M2043 82H2060.8L2051.9 91.5Z" fill="#AFB1B3"/>
<path d="M2104.1 74.1V97.9L2123.3 86Z" fill="#499C54"/>
<path d="M2157.5 73.2L2164 79.5L2170.5 73.2" stroke="#499C54" stroke-width="3" fill="none"/>
<rect x="2156" y="77.3" width="16.5" height="22.8" rx="8" fill="#499C54"/>
<rect x="2152" y="81" width="24" height="3" fill="#499C54"/><rect x="2152" y="87" width="24" height="3" fill="#499C54"/><rect x="2152" y="93.8" width="24" height="3" fill="#499C54"/>
<rect x="2160.3" y="84.2" width="7.7" height="3.2" fill="#3C3F41"/><rect x="2160.3" y="90.1" width="7.7" height="3.2" fill="#3C3F41"/>
<path d="M2201.8 76L2211.8 73.9L2221.8 76V82H2216V78.2H2212.3V95.6L2211.8 97.9L2206 94.5C2203 92 2201.8 89 2201.8 85.5Z" fill="#AFB1B3"/>
<path d="M2212.3 95.6V78.2H2216V92" fill="none" stroke="#AFB1B3" stroke-width="0"/>
<path d="M2217.7 84.2V102L2231.4 92.8Z" fill="#499C54"/>
<path d="M2270.5 97A11.4 11.4 0 1 1 2277.8 80.5" fill="none" stroke="#AFB1B3" stroke-width="3"/>
<path d="M2268.8 79.2V85L2264.3 89.2" fill="none" stroke="#AFB1B3" stroke-width="2.4"/>
<path d="M2272 84.2V102L2285.3 93.3Z" fill="#D35E5E" stroke="#3C3F41" stroke-width="0.8"/>
<path d="M2298 83.9H2314L2305.8 91.9Z" fill="#AFB1B3"/>
<rect x="2340" y="76" width="20" height="20" fill="#5A5A5A"/>
<rect x="2382" y="66.2" width="2" height="39.5" fill="#505050"/>
<path d="M2401.9 76H2412.9L2415.2 80H2430V85H2422.5V93H2415V96H2401.9Z" fill="#AFB1B3"/>
<rect x="2423.8" y="85.7" width="6.5" height="6.2" fill="#3592C4"/><rect x="2416" y="93.8" width="6.1" height="6.2" fill="#3592C4"/><rect x="2423.8" y="93.8" width="6.5" height="6.2" fill="#3592C4"/>
<rect x="2448" y="66.2" width="2" height="39.5" fill="#505050"/>
<rect x="2468.8" y="74.8" width="26.2" height="22.3" fill="none" stroke="#AFB1B3" stroke-width="2"/>
<rect x="2467.8" y="73.8" width="28.2" height="6.2" fill="#AFB1B3"/>
<path d="M2473.8 81.9V93.8L2483 87.8Z" fill="#499C54"/>
<circle cx="2531.4" cy="83.3" r="9.3" fill="none" stroke="#AFB1B3" stroke-width="4.2"/>
<path d="M2538 90.5L2546.5 99" stroke="#AFB1B3" stroke-width="5"/>
</svg>
<div class="t" style="left:1914px;top:75px;font-size:25px;color:#BBBBBB">employee</div>
<div class="t" style="left:12px;top:232px;font-size:23.3px;color:#DDDDDD;transform:rotate(-90deg);transform-origin:0 0"><u>1</u>: Project</div>
<svg class="a" style="left:12px;top:244px" width="22" height="19" viewBox="0 0 22 19"><path d="M0 0H8L11 4H22V19H0Z" fill="#AFB1B3"/></svg>
<div class="t" style="left:12px;top:432px;font-size:23px;color:#BBBBBB;transform:rotate(-90deg);transform-origin:0 0"><u>7</u>: Structure</div>
<svg class="a" style="left:12px;top:443px" width="22" height="20" viewBox="0 0 22 20"><rect x="12" y="0" width="8" height="8" fill="#AFB1B3"/><rect x="1" y="10" width="8" height="8" fill="#AFB1B3"/><rect x="12" y="10" width="8" height="8" fill="#AFB1B3"/></svg>
<div class="t" style="left:13px;top:1361px;font-size:23px;color:#BBBBBB;transform:rotate(-90deg);transform-origin:0 0"><u>2</u>: Favorites</div>
<svg class="a" style="left:9px;top:1370px" width="26" height="26" viewBox="0 0 26 26"><path d="M13 1L16.5 9.5L25 10L18.5 16L20.5 25L13 20.5L5.5 25L7.5 16L1 10L9.5 9.5Z" fill="#AFB1B3"/></svg>
<svg class="a" style="left:2526px;top:134px" width="28" height="28" viewBox="0 0 28 28"><ellipse cx="14" cy="5" rx="11" ry="4" fill="#AFB1B3"/><path d="M3 9C3 12 25 12 25 9V13C25 16 3 16 3 13Z M3 16C3 19 25 19 25 16V20C25 23 3 23 3 20Z M3 22.5C3 25.5 25 25.5 25 22.5V25C25 28 3 28 3 25Z" fill="#AFB1B3"/></svg>
<div class="t" style="left:2553px;top:171px;font-size:23px;color:#BBBBBB;transform:rotate(90deg);transform-origin:0 0">Database</div>
<svg class="a" style="left:2528px;top:306px" width="26" height="26" viewBox="0 0 26 26"><circle cx="13" cy="7" r="4.5" fill="#AFB1B3"/><ellipse cx="13" cy="17" rx="5" ry="7" fill="#AFB1B3"/><path d="M1 3L8 9M25 3L18 9M1 14H8M25 14H18M2 25L8 19M24 25L18 19" stroke="#AFB1B3" stroke-width="2"/></svg>
<div class="t" style="left:2553px;top:339px;font-size:25px;color:#BBBBBB;transform:rotate(90deg);transform-origin:0 0">Ant</div>
<div class="t" style="left:56px;top:1377px;font-size:25px;color:#BBBBBB">Run:</div>
<svg class="a" style="left:147px;top:1373px" width="30" height="28" viewBox="0 0 30 28"><rect x="5" y="1" width="24" height="20" fill="none" stroke="#5E6265" stroke-width="2"/><rect x="1" y="6" width="24" height="20" fill="#3C3F41" stroke="#5E6265" stroke-width="2"/><rect x="4" y="10" width="18" height="13" fill="#3E5A66"/></svg>
<div class="t" style="left:186px;top:1377px;font-size:25.5px;color:#BBBBBB">employee</div>
<svg class="a" style="left:313px;top:1381px" width="18" height="18" viewBox="0 0 18 18"><path d="M2 2L16 16M16 2L2 16" stroke="#6E7072" stroke-width="2"/></svg>
<div class="a" style="left:122px;top:1410px;width:230px;height:6px;background:#6D737A"></div>
<svg class="a" style="left:2428px;top:1374px" width="28" height="28" viewBox="0 0 28 28"><g fill="#AFB1B3"><circle cx="14" cy="14" r="9.5"/><rect x="-3.25" y="-13" width="6.5" height="26" transform="translate(14 14) rotate(0)"/><rect x="-3.25" y="-13" width="6.5" height="26" transform="translate(14 14) rotate(60)"/><rect x="-3.25" y="-13" width="6.5" height="26" transform="translate(14 14) rotate(120)"/></g><circle cx="14" cy="14" r="4.3" fill="#3C3F41"/></svg>
<div class="a" style="left:2482px;top:1386px;width:24px;height:4px;background:#AFB1B3"></div>
<svg class="a" style="left:67px;top:1436px" width="22" height="18" viewBox="0 0 22 18"><rect x="0" y="0" width="4" height="4" fill="#AFB1B3"/><rect x="6" y="0" width="16" height="4" fill="#AFB1B3"/><rect x="0" y="7" width="4" height="4" fill="#AFB1B3"/><rect x="6" y="7" width="16" height="4" fill="#AFB1B3"/><rect x="0" y="14" width="4" height="4" fill="#AFB1B3"/><rect x="6" y="14" width="16" height="4" fill="#AFB1B3"/></svg>
<div class="t" style="left:98px;top:1433px;font-size:23.5px;color:#BBBBBB"><u>6</u>: TODO</div>
<svg class="a" style="left:235px;top:1433px" width="18" height="26" viewBox="0 0 18 26"><path d="M0 0L17 12L0 24Z" fill="#AFB1B3"/></svg>
<div class="t" style="left:265px;top:1433px;font-size:24.5px;color:#EEEEEE"><u>4</u>: Run</div>
<svg class="a" style="left:375px;top:1436px" width="24" height="20" viewBox="0 0 24 20"><rect x="0" y="0" width="22" height="20" fill="#AFB1B3"/><path d="M4 4L9 8L4 12" stroke="#3C3F41" stroke-width="2" fill="none"/><rect x="10" y="13" width="8" height="2" fill="#3C3F41"/></svg>
<div class="t" style="left:407px;top:1433px;font-size:24.5px;color:#BBBBBB">Terminal</div>
<svg class="a" style="left:2362px;top:1434px" width="28" height="28" viewBox="0 0 28 28"><circle cx="13" cy="13" r="11" fill="none" stroke="#AFB1B3" stroke-width="3"/></svg>
<div class="t" style="left:2396px;top:1433px;font-size:24.5px;color:#BBBBBB">Event Log</div>
<svg class="a" style="left:11px;top:1473px" width="28" height="28" viewBox="0 0 28 28"><rect x="6" y="2" width="19" height="18.5" fill="none" stroke="#AFB1B3" stroke-width="2"/><path d="M2 6V25H21" fill="none" stroke="#AFB1B3" stroke-width="2"/></svg>
<div class="t" style="left:54px;top:1473px;font-size:25.5px;color:#BBBBBB">All files are up-to-date (today 9:20)</div>
<div class="t" style="left:2143px;top:1473px;font-size:25.5px;color:#BBBBBB">14:1</div>
<div class="t" style="left:2214px;top:1473px;font-size:24px;color:#BBBBBB">CRLF</div>
<div class="t" style="left:2296px;top:1473px;font-size:25.5px;color:#BBBBBB">UTF</div>
<div class="t" style="left:2490px;top:1473px;font-size:25.5px;color:#BBBBBB">Tab*</div>
<div class="a" style="left:0;top:1503px;width:2560px;height:3px;background:#CBE6E4"></div>
<svg class="a" style="left:352px;top:68px" width="32" height="34" viewBox="0 0 32 34"><circle cx="14" cy="18" r="14" fill="#3E8DAD"/><path d="M17.4 14.6A4.7 4.7 0 1 0 17.4 21.4" stroke="#263238" stroke-width="2.2" fill="none"/><path d="M20.2 2L20.2 15.9L30.1 9.1Z" fill="#62B543"/></svg>
<svg class="a" style="left:0;top:0" width="700" height="1000" viewBox="0 0 700 1000"><polygon points="131.0,372.0 603.0,373.0 603.0,378.5 619.0,370.5 603.0,362.5 603.0,368.0 131.0,370.6" fill="#F23A3A"/><polygon points="193.7,527.0 404.5,529.4 404.5,534.9 421.5,526.9 404.5,518.9 404.5,524.4 193.7,525.6" fill="#F23A3A"/><polygon points="206.4,609.9 371.7,611.2 371.7,616.4 387.2,608.6 371.7,600.9 371.7,606.2 206.4,608.5" fill="#F23A3A"/><polygon points="201.0,649.7 387.4,652.9 387.3,658.1 403.4,650.5 387.5,642.6 387.4,647.9 201.0,648.3" fill="#F23A3A"/><polygon points="199.7,701.1 399.4,703.6 399.4,709.1 415.0,701.2 399.4,693.1 399.4,698.6 199.7,699.7" fill="#F23A3A"/><polygon points="214.5,729.4 401.9,738.6 401.7,744.1 419.6,736.8 402.3,728.1 402.1,733.6 214.5,728.0" fill="#F23A3A"/><polygon points="224.1,773.9 295.8,770.0 296.2,775.5 311.7,766.2 294.9,759.5 295.4,765.0 223.9,772.5" fill="#F23A3A"/><polygon points="213.2,852.7 371.1,848.9 371.3,854.1 387.7,845.8 370.7,838.6 370.9,843.9 213.2,851.3" fill="#F23A3A"/><polygon points="318.4,978.2 350.0,980.0 350.0,985.2 366.2,977.5 350.0,969.8 350.0,975.0 318.4,976.8" fill="#F23A3A"/></svg>
<svg class="a" style="left:2300px;top:1120px" width="260" height="130" viewBox="0 0 260 130">
<defs><linearGradient id="arc" x1="0" y1="0" x2="0" y2="1"><stop offset="0" stop-color="#2FC6B5"/><stop offset="1" stop-color="#A6D84A"/></linearGradient></defs>
<path d="M60 22H200A41.5 41.5 0 0 1 200 105H60Z" fill="#1E222B"/>
<line x1="100" y1="65" x2="232" y2="65" stroke="#30343C" stroke-width="1.5"/>
<circle cx="65" cy="63.5" r="58" fill="#1B1F28"/>
<circle cx="65" cy="63.5" r="56" fill="#2A2F3B"/>
<path d="M66 12A51 51 0 0 1 90 108" stroke="url(#arc)" stroke-width="3" fill="none"/>
<text x="32" y="80" font-family="Liberation Sans" font-size="44" fill="#E8E8E8">42</text>
<text x="86" y="81" font-family="Liberation Sans" font-size="18" fill="#E8E8E8">%</text>
<path d="M137 35L132 42H135V48H139V42H142Z" fill="#3AA0E6"/>
<path d="M137 89L132 82H135V76H139V82H142Z" fill="#2CB043"/>
<text x="163" y="51" font-family="Liberation Sans" font-size="20" fill="#F0F0F0">3.2</text><text x="196" y="52" font-family="Liberation Sans" font-size="16" fill="#C8C8C8">K/s</text>
<text x="163" y="92" font-family="Liberation Sans" font-size="20" fill="#F0F0F0">2.1</text><text x="196" y="93" font-family="Liberation Sans" font-size="16" fill="#C8C8C8">K/s</text>
</svg>
<div class="a" style="left:2335px;top:1452px;width:153px;height:54px;background:linear-gradient(#E4F0FA,#C9DFF2);"></div>
<div class="a" style="left:2386px;top:1458px;width:1px;height:44px;background:#B9CFE2"></div>
<div class="a" style="left:2435px;top:1458px;width:1px;height:44px;background:#B9CFE2"></div>
<div class="t" style="left:2348px;top:1466px;font-size:26px;color:#3B6578;font-weight:bold">英</div>
<svg class="a" style="left:2396px;top:1466px" width="30" height="26" viewBox="0 0 30 26"><path d="M8 2L13 4H17L22 2L29 8L25 13L22 11V24H8V11L5 13L1 8Z" fill="#2C6A80"/></svg>
<svg class="a" style="left:2452px;top:1476px" width="24" height="20" viewBox="0 0 24 20"><path d="M12 0L15 7L23 8L17 13L19 20L12 16L5 20L7 13L1 8L9 7Z" fill="#F7B500"/></svg>
<div class="t" style="left:2421px;top:1482px;font-size:15.6px;color:#E8E8E8;text-shadow:0 0 1.5px #333,0 0 1px #333">CSDN @terrific51</div>
</body></html>
